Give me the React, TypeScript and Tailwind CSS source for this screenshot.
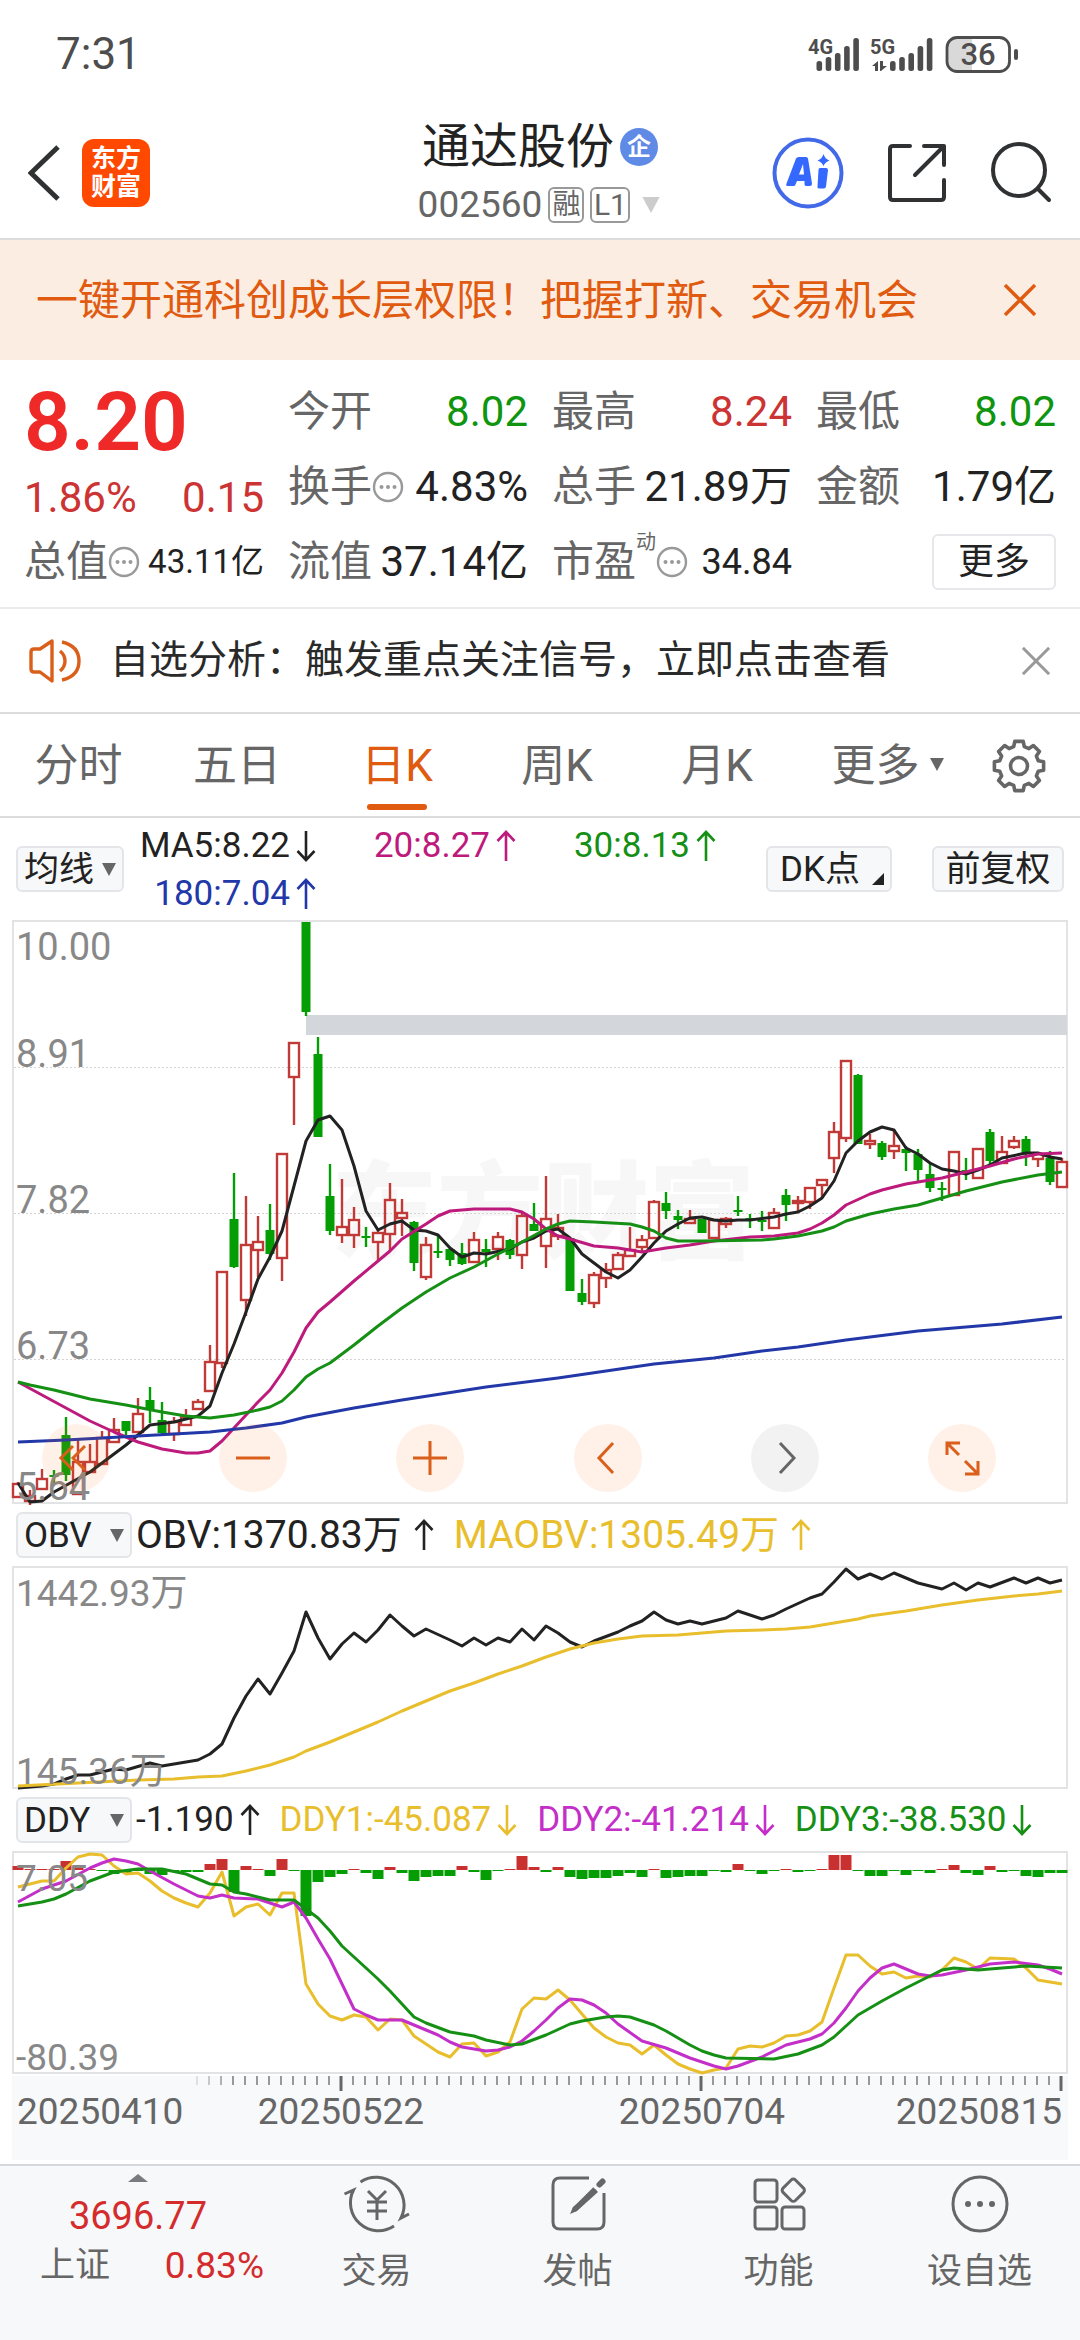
import React from "react";
import clsx from "clsx";

type Point = [number, number];
// direction, high, body top, body bottom, low
type Candle = ["r" | "g", number, number, number, number];

const STEP = 12;
const COUNT = 88;
const CHART_WIDTH = 1056;
const RED = "#c03a38";
const GREEN = "#049e04";

const xAt = (i: number) => 5 + i * STEP;
const toPoints = (line: Point[]) => line.map(([i, y]) => `${xAt(i)},${y}`).join(" ");

const candles: Candle[] = [
  ["r", 560, 562, 575, 575], ["r", 568, 574, 579, 583], ["r", 547, 557, 567, 567], ["g", 548, 553, 555, 561],
  ["g", 495, 513, 553, 559], ["r", 516, 540, 572, 572], ["r", 522, 540, 550, 550], ["r", 509, 516, 542, 542],
  ["r", 496, 508, 520, 520], ["g", 499, 499, 509, 513], ["r", 476, 492, 510, 510], ["g", 465, 478, 488, 501],
  ["g", 480, 498, 511, 512], ["r", 495, 500, 512, 519], ["r", 487, 495, 503, 503], ["r", 477, 480, 487, 487],
  ["r", 423, 440, 469, 469], ["r", 350, 350, 441, 446], ["g", 251, 297, 345, 346], ["r", 274, 323, 378, 394],
  ["r", 294, 320, 328, 355], ["g", 282, 308, 332, 338], ["r", 232, 232, 336, 359], ["r", 121, 121, 155, 203],
  ["g", 0, 0, 90, 94], ["g", 115, 132, 215, 215], ["g", 242, 274, 309, 313], ["r", 257, 305, 313, 321],
  ["r", 285, 298, 313, 326], ["g", 305, 314, 316, 325], ["r", 307, 311, 320, 338], ["r", 261, 278, 312, 329],
  ["r", 277, 291, 296, 314], ["g", 299, 300, 341, 349], ["r", 315, 323, 355, 358], ["g", 314, 329, 331, 336],
  ["g", 326, 327, 338, 344], ["g", 321, 331, 342, 343], ["r", 310, 318, 340, 340], ["g", 317, 327, 330, 345],
  ["r", 310, 315, 327, 338], ["g", 317, 318, 333, 337], ["r", 291, 294, 333, 347], ["g", 281, 302, 309, 309],
  ["r", 254, 297, 324, 346], ["r", 292, 306, 314, 318], ["g", 316, 316, 369, 369], ["g", 357, 371, 380, 383],
  ["r", 350, 353, 381, 386], ["r", 341, 348, 356, 366], ["r", 330, 333, 347, 347], ["r", 305, 328, 334, 334],
  ["r", 313, 318, 325, 330], ["r", 278, 280, 316, 316], ["g", 270, 281, 289, 297], ["g", 288, 294, 298, 307],
  ["r", 288, 297, 301, 301], ["g", 297, 297, 311, 311], ["r", 298, 298, 316, 316], ["r", 295, 297, 302, 306],
  ["g", 274, 288, 290, 294], ["g", 292, 296, 298, 306], ["g", 289, 298, 299, 309], ["r", 286, 291, 306, 306],
  ["g", 267, 273, 283, 299], ["r", 274, 279, 281, 289], ["r", 266, 266, 280, 287], ["r", 257, 258, 263, 276],
  ["r", 200, 210, 236, 251], ["r", 138, 139, 216, 220], ["g", 152, 153, 222, 222], ["r", 212, 219, 222, 227],
  ["g", 219, 221, 235, 238], ["r", 207, 224, 229, 237], ["g", 224, 227, 231, 249], ["g", 227, 232, 248, 259],
  ["g", 242, 252, 266, 270], ["g", 260, 266, 268, 279], ["r", 229, 230, 273, 273], ["g", 236, 248, 250, 258],
  ["r", 227, 227, 256, 256], ["g", 207, 210, 239, 242], ["r", 214, 230, 241, 241], ["r", 214, 219, 225, 227],
  ["g", 214, 217, 232, 244], ["r", 230, 232, 237, 245], ["g", 229, 236, 260, 263], ["r", 236, 240, 265, 265],
];

const ma5: Point[] = [
  [0, 561], [1, 580], [2, 579], [3, 570], [6, 550], [7, 541], [9, 523], [11, 503], [13, 500], [15, 494], [16, 484],
  [17, 451], [18, 422], [19, 390], [20, 357], [21, 335], [22, 309], [23, 264], [24, 219], [25, 198], [26, 194],
  [27, 208], [28, 244], [29, 289], [30, 308], [31, 302], [32, 299], [33, 308], [34, 309], [35, 313], [36, 326],
  [37, 335], [38, 331], [39, 332], [41, 327], [42, 320], [43, 316], [44, 309], [45, 307], [46, 316], [47, 332],
  [48, 341], [49, 350], [50, 356], [51, 348], [52, 335], [53, 321], [54, 309], [55, 302], [56, 296], [57, 295],
  [58, 298], [59, 299], [60, 298], [61, 298], [63, 295], [64, 292], [65, 290], [66, 284], [67, 276], [68, 259],
  [69, 231], [70, 219], [71, 210], [72, 205], [73, 208], [74, 226], [75, 232], [76, 241], [77, 247], [78, 249],
  [79, 252], [80, 248], [81, 243], [82, 236], [84, 231], [85, 231], [86, 235], [87, 237],
];

const ma20: Point[] = [
  [0, 460], [2, 473], [4, 486], [6, 499], [8, 510], [10, 520], [12, 527], [14, 531], [15, 531], [16, 529], [17, 519],
  [19, 493], [20, 480], [21, 468], [22, 451], [23, 430], [24, 406], [25, 390], [26, 380], [28, 359], [30, 339],
  [31, 329], [32, 317], [34, 302], [35, 294], [36, 289], [38, 287], [41, 287], [42, 290], [43, 297], [44, 307],
  [45, 314], [46, 317], [48, 324], [50, 326], [52, 330], [54, 326], [56, 323], [58, 319], [61, 315], [63, 314],
  [65, 311], [66, 307], [67, 301], [68, 293], [69, 283], [71, 272], [72, 268], [74, 262], [75, 260], [77, 256],
  [79, 250], [81, 244], [83, 237], [85, 232], [87, 231],
];

const ma30: Point[] = [
  [0, 460], [1, 463], [3, 468], [6, 477], [9, 483], [12, 490], [14, 494], [16, 496], [18, 493], [20, 488], [21, 485],
  [22, 479], [23, 468], [24, 455], [25, 447], [26, 441], [27, 432], [28, 423], [30, 404], [31, 395], [32, 386],
  [34, 370], [36, 356], [38, 345], [40, 332], [42, 320], [44, 307], [45, 302], [46, 299], [48, 300], [51, 302],
  [52, 305], [53, 309], [54, 316], [55, 319], [57, 319], [62, 318], [63, 317], [65, 314], [67, 309], [68, 305],
  [69, 299], [71, 292], [73, 287], [75, 283], [77, 276], [79, 269], [82, 260], [85, 253], [87, 250],
];

const ma180: Point[] = [
  [0, 520], [4, 518], [10, 514], [16, 510], [19, 506], [22, 501], [24, 495], [28, 486], [32, 478], [39, 465],
  [45, 456], [53, 442], [58, 436], [62, 429], [65, 425], [69, 418], [75, 409], [82, 402], [87, 395],
];

const obv: Point[] = [
  [0, 220], [2, 218], [3, 216], [4, 211], [5, 207], [6, 207], [8, 201], [9, 202], [11, 195], [12, 198], [15, 192],
  [16, 186], [17, 176], [18, 150], [19, 128], [20, 111], [21, 126], [22, 105], [23, 83], [24, 44], [25, 70],
  [26, 91], [27, 76], [28, 65], [29, 74], [30, 62], [31, 47], [32, 58], [33, 68], [34, 61], [36, 72], [37, 78],
  [38, 70], [39, 77], [40, 70], [41, 74], [42, 61], [43, 72], [44, 58], [45, 65], [46, 74], [47, 79], [48, 73],
  [50, 64], [51, 58], [52, 53], [53, 44], [54, 52], [55, 56], [56, 53], [57, 56], [59, 50], [60, 43], [62, 51],
  [63, 47], [64, 41], [66, 30], [67, 26], [68, 14], [69, 1], [70, 11], [71, 6], [72, 11], [73, 5], [74, 10],
  [75, 15], [77, 21], [78, 15], [79, 22], [80, 15], [81, 19], [83, 10], [84, 15], [85, 10], [86, 15], [87, 12],
];

const maObv: Point[] = [
  [0, 218], [5, 215], [10, 212], [13, 211], [15, 209], [17, 208], [19, 203], [21, 197], [23, 189], [24, 183],
  [26, 174], [28, 164], [30, 154], [32, 143], [34, 133], [36, 123], [38, 115], [40, 106], [42, 98], [44, 89],
  [46, 81], [48, 75], [50, 71], [52, 68], [55, 67], [57, 65], [59, 63], [62, 62], [64, 61], [66, 59], [68, 55],
  [70, 51], [71, 48], [74, 43], [77, 37], [80, 32], [83, 28], [85, 26], [87, 23],
];

const ddx = [
  4, 1, 1, 1, 9, 4, 1, -1, -4, -3, -1, -4, -5, -2, -2, -2, 6, 11, -22, 4, 1, -6, 11, -1, -46, -12, -7, -4, 1, -3, -9, 3,
  -3, -11, -7, -6, -6, 4, -2, -10, -1, 1, 14, 3, -2, 3, -7, -9, -8, -8, -6, -3, -7, 1, -8, -7, -6, -6, -1, -2, 6, -1,
  -4, -1, 1, -2, -1, 1, 15, 15, -1, -6, -6, -1, -5, -1, -3, 1, 5, -3, -5, 4, -2, -1, -6, -7, -3, -3,
];

const ddy1: Point[] = [
  [0, 34], [2, 28], [3, 28], [4, 15], [5, 4], [6, 1], [7, 2], [8, 13], [9, 21], [10, 20], [11, 28], [12, 38],
  [13, 45], [14, 50], [15, 54], [16, 40], [17, 19], [18, 63], [19, 54], [20, 51], [21, 62], [22, 40], [23, 40],
  [24, 131], [25, 151], [26, 163], [27, 167], [28, 162], [29, 164], [30, 177], [31, 166], [32, 167], [33, 183],
  [34, 191], [35, 199], [36, 204], [37, 191], [38, 190], [39, 203], [40, 199], [41, 189], [42, 156], [43, 145],
  [44, 146], [45, 137], [46, 147], [47, 161], [48, 175], [49, 184], [50, 190], [51, 192], [52, 201], [53, 192],
  [54, 202], [55, 211], [56, 216], [57, 220], [58, 217], [59, 215], [60, 196], [61, 193], [62, 194], [63, 190],
  [64, 183], [65, 182], [66, 178], [67, 169], [68, 135], [69, 102], [70, 102], [71, 113], [72, 121], [73, 119],
  [74, 125], [75, 123], [76, 124], [77, 117], [78, 105], [79, 109], [80, 116], [81, 105], [83, 106], [84, 115],
  [85, 127], [87, 131],
];

const ddy2: Point[] = [
  [0, 49], [2, 36], [4, 28], [6, 15], [7, 10], [8, 6], [9, 8], [10, 11], [11, 18], [13, 31], [15, 43], [16, 45],
  [17, 42], [18, 45], [20, 46], [22, 54], [23, 49], [24, 65], [25, 86], [26, 106], [27, 131], [28, 156], [29, 162],
  [30, 167], [32, 167], [34, 177], [35, 182], [36, 189], [37, 194], [39, 198], [40, 197], [41, 194], [42, 188],
  [43, 178], [44, 167], [45, 155], [46, 146], [47, 147], [48, 152], [49, 160], [50, 171], [52, 188], [54, 195],
  [56, 205], [58, 213], [59, 216], [60, 213], [62, 204], [64, 192], [66, 186], [67, 181], [68, 170], [69, 155],
  [70, 138], [71, 125], [72, 115], [73, 111], [74, 116], [75, 121], [76, 123], [77, 122], [79, 117], [81, 111],
  [83, 109], [85, 112], [86, 116], [87, 121],
];

const ddy3: Point[] = [
  [0, 53], [2, 49], [3, 46], [4, 41], [6, 28], [8, 19], [10, 16], [12, 16], [14, 21], [16, 31], [17, 32], [18, 39],
  [19, 41], [21, 47], [23, 47], [25, 65], [26, 78], [27, 93], [28, 104], [30, 126], [31, 138], [32, 151], [33, 164],
  [34, 170], [36, 179], [38, 183], [39, 187], [41, 192], [42, 191], [44, 182], [46, 171], [47, 168], [49, 164],
  [50, 163], [51, 164], [53, 172], [54, 178], [56, 192], [57, 198], [58, 202], [59, 205], [63, 206], [65, 201],
  [67, 192], [68, 184], [69, 173], [70, 162], [72, 148], [74, 135], [76, 123], [77, 117], [78, 115], [80, 117],
  [82, 115], [84, 113], [87, 115],
];

const Line = ({ data, color }: { data: Point[]; color: string }) => (
  <polyline points={toPoints(data)} fill="none" stroke={color} strokeWidth="3" strokeLinejoin="round" />
);

const Arrow = ({ down = false, className }: { down?: boolean; className?: string }) => (
  <svg viewBox="0 0 20 32" className={clsx("inline-block shrink-0", className)} fill="none" stroke="currentColor" strokeWidth="2.6">
    <path d={down ? "M10 1V30M1.500 21L10 30L18.500 21" : "M10 31V2M1.500 11L10 2L18.500 11"} />
  </svg>
);

const Triangle = ({ className }: { className?: string }) => (
  <svg viewBox="0 0 14 13" className={className} fill="currentColor">
    <path d="M0 0H14L7 13Z" />
  </svg>
);

const More = () => (
  <svg viewBox="0 0 32 32" className="size-8 shrink-0" fill="none" stroke="#999" strokeWidth="2.4">
    <circle cx="16" cy="16" r="14" />
    <g fill="#999" stroke="none">
      <circle cx="9.500" cy="16" r="2" />
      <circle cx="16" cy="16" r="2" />
      <circle cx="22.500" cy="16" r="2" />
    </g>
  </svg>
);

const Close = ({ className }: { className?: string }) => (
  <svg viewBox="0 0 32 32" className={className} fill="none" stroke="currentColor" strokeWidth="3.4">
    <path d="M1 1L31 31M31 1L1 31" />
  </svg>
);

const Gear = () => {
  const points: string[] = [];
  for (let i = 0; i < 8; i++) {
    const a = (i * Math.PI) / 4 - Math.PI / 2;
    [[-0.27, 20], [-0.17, 25], [0.17, 25], [0.27, 20]].forEach(([d, r]) => {
      points.push(`${(28 + r * Math.cos(a + d)).toFixed(1)},${(28 + r * Math.sin(a + d)).toFixed(1)}`);
    });
  }
  return (
    <svg viewBox="0 0 56 56" className="size-14" fill="none" stroke="#666" strokeWidth="3.6" strokeLinejoin="round">
      <polygon points={points.join(" ")} />
      <circle cx="28" cy="28" r="8.500" />
    </svg>
  );
};

const StatusBar = () => {
  const tops = [30, 26, 22, 15, 7];
  return (
    <div className="flex h-27 items-center justify-between pl-14 pr-15 text-[#4d4d4d]">
      <span className="text-[44px]">7:31</span>
      <svg viewBox="0 0 212 46" className="h-[46px] w-[212px]" fill="currentColor">
        <text x="0" y="23" fontSize="20" fontWeight="700">4G</text>
        <text x="62" y="23" fontSize="20" fontWeight="700">5G</text>
        {tops.map((top, i) => (
          <React.Fragment key={top}>
            <rect x={8.5 + i * 9.2} y={top} width="5.600" height={40 - top} rx="2.500" />
            <rect x={82 + i * 9.2} y={top} width="5.600" height={40 - top} rx="2.500" />
          </React.Fragment>
        ))}
        <path d="M64 35L70 30V40H67V35ZM72 30H75V35H79L73 40H72Z" />
        <path d="M164 7H148Q139 7 139 16V31Q139 40 148 40H164Z" fill="#d9d9d9" />
        <rect x="139" y="6.500" width="62.500" height="34" rx="10" fill="none" stroke="currentColor" strokeWidth="2.800" />
        <rect x="206" y="18" width="4" height="11" rx="2" />
        <text x="170" y="34" fontSize="31" fontWeight="500" textAnchor="middle">36</text>
      </svg>
    </div>
  );
};

const Header = () => (
  <header className="grid h-[132px] grid-cols-[1fr_auto_1fr] items-center border-b-2 border-[#dadcde] pl-7 pr-7">
    <div className="flex items-center gap-5">
      <button aria-label="返回">
        <svg viewBox="0 0 34 56" className="h-14 w-[34px]" fill="none" stroke="#2f3133" strokeWidth="5">
          <path d="M30 2L3 28L30 54" />
        </svg>
      </button>
      <a href="#home" className="flex size-17 flex-col items-center justify-center rounded-xl bg-[#ff4800] text-[25px] font-bold leading-7 text-white">
        <span>东方</span>
        <span>财富</span>
      </a>
    </div>
    <div className="flex flex-col items-center pt-2">
      <h1 className="flex items-center gap-1.5 text-5xl leading-14 text-[#222]">
        通达股份
        <span className="flex size-[38px] items-center justify-center rounded-full bg-[#5f8ae6] text-[24px] font-bold text-white">企</span>
      </h1>
      <button className="flex items-center gap-1.5 text-[37px] leading-15 text-[#666]">
        002560
        <span className="flex h-9 w-9 items-center justify-center rounded-md border-2 border-[#999] text-[28px] leading-8">融</span>
        <span className="flex h-9 w-10 items-center justify-center rounded-md border-2 border-[#999] text-[30px] leading-8">L1</span>
        <Triangle className="ml-1 h-4 w-[22px] text-[#ccc]" />
      </button>
    </div>
    <div className="flex items-center justify-end gap-[42px]">
      <button aria-label="Ai">
        <svg viewBox="0 0 72 72" className="size-[72px]">
          <circle cx="36" cy="36" r="33.500" fill="none" stroke="#4169e8" strokeWidth="4" />
          <path d="M24 21.500Q25 20 26.500 20H34Q35.500 20 36 21.500L40 46.500Q40 49 38 49H34Q32.500 49 32.500 47V44H25L23.500 47.500Q23 49 21.500 49H15.500Q13.500 49 14.500 46.500ZM31 27L27 37.500H32Z" fill="#3468ff" fillRule="evenodd" />
          <path d="M48 31H54Q56 31 56 33L54 49.500Q53.500 51.500 52 51.500H47Q45 51.500 45.500 49.500L46.500 33Q46.500 31 48 31ZM51.500 17Q53 22 57.500 23.500Q53 25 51.500 29Q50 25 45.500 23.500Q50 22 51.500 17Z" fill="#3468ff" />
        </svg>
      </button>
      <button aria-label="分享">
        <svg viewBox="0 0 62 62" className="size-[62px]" fill="none" stroke="#2f3133" strokeWidth="4" strokeLinecap="round" strokeLinejoin="round">
          <path d="M24 4H7Q4 4 4 7V55Q4 58 7 58H55Q58 58 58 55V38M38 4H58V23M58 4L29 33" />
        </svg>
      </button>
      <button aria-label="搜索">
        <svg viewBox="0 0 62 62" className="size-[62px]" fill="none" stroke="#2f3133" strokeWidth="4" strokeLinecap="round">
          <circle cx="29" cy="28" r="26" />
          <path d="M48 47L59 58" />
        </svg>
      </button>
    </div>
  </header>
);

interface QuoteProps {
  label: string;
  value: string;
  color?: string;
  more?: boolean;
  sup?: string;
  size?: string;
}

const Quote = ({ label, value, color = "text-[#222]", more, sup, size = "text-[42px]" }: QuoteProps) => (
  <div className="flex h-[75px] items-center justify-between whitespace-nowrap">
    <span className="flex items-center text-[42px] text-[#666]">
      {label}
      {sup && <sup className="-top-5 text-xl leading-none">{sup}</sup>}
      {more && <More />}
    </span>
    <span className={clsx(color, size)}>{value}</span>
  </div>
);

const QuotePanel = () => (
  <section className="grid grid-cols-4 gap-x-6 border-b-2 border-[#ececee] px-6 pb-2 pt-3.5">
    <div>
      <div className="h-24 text-[82px] font-semibold leading-24 text-[#ef2828]">8.20</div>
      <div className="flex h-[54px] items-center justify-between text-[42px] text-[#cc3333]">
        <span>1.86%</span>
        <span>0.15</span>
      </div>
      <Quote label="总值" value="43.11亿" more size="text-[33px]" />
    </div>
    <div>
      <Quote label="今开" value="8.02" color="text-[#0f950f]" />
      <Quote label="换手" value="4.83%" more />
      <Quote label="流值" value="37.14亿" />
    </div>
    <div>
      <Quote label="最高" value="8.24" color="text-[#cc3333]" />
      <Quote label="总手" value="21.89万" />
      <Quote label="市盈" value="34.84" sup="动" more size="text-4xl" />
    </div>
    <div>
      <Quote label="最低" value="8.02" color="text-[#0f950f]" />
      <Quote label="金额" value="1.79亿" />
      <div className="flex h-[75px] items-center justify-end">
        <button className="h-14 w-[124px] rounded-md border-2 border-[#e6e7ea] text-4xl leading-none text-[#222]">更多</button>
      </div>
    </div>
  </section>
);

const Notice = () => (
  <div className="flex h-[105px] items-center border-b-2 border-[#dcdcde] pl-7 pr-[30px]">
    <svg viewBox="0 0 54 46" className="h-[46px] w-[54px]" fill="none" stroke="#d95f1a" strokeWidth="3.400" strokeLinejoin="round">
      <path d="M3 14Q3 11 6 11H12L24 3V43L12 34H6Q3 34 3 31Z" />
      <path d="M32 13Q37 17 37 23Q37 29 32 33M34 4Q51 8 51 23Q51 38 34 42" />
    </svg>
    <a href="#signal" className="ml-7 flex-1 whitespace-nowrap text-[39px] text-[#2a2a2a]">自选分析：触发重点关注信号，立即点击查看</a>
    <button aria-label="关闭" className="text-[#999]">
      <Close className="size-7" />
    </button>
  </div>
);

const tabs = ["分时", "五日", "日K", "周K", "月K"];

const Tabs = () => (
  <nav className="grid h-[104px] grid-cols-[157fr_160fr_160fr_160fr_160fr_181fr_82fr] border-b-2 border-[#dcdcde] pr-5 text-[44px] text-[#666]">
    {tabs.map((tab) => {
      const active = tab === "日K";
      return (
        <button key={tab} className={clsx("flex flex-col items-center pt-5", active && "text-[#e05a10]")}>
          <span className="leading-16">{tab}</span>
          {active && <span className="mt-1.5 h-1.5 w-15 rounded-full bg-[#e05a10]" />}
        </button>
      );
    })}
    <button className="flex items-start justify-center gap-2.5 pt-5 leading-16">
      更多
      <Triangle className="mt-6 h-[13px] w-3.5" />
    </button>
    <button aria-label="设置" className="flex justify-center pt-6">
      <Gear />
    </button>
  </nav>
);

const IndicatorSelect = ({ id, label, options, className }: { id: string; label: string; options: string[]; className: string }) => (
  <label htmlFor={id} className={clsx("relative block shrink-0", className)}>
    <span className="sr-only">{label}</span>
    <select id={id} className="block h-[46px] w-full appearance-none rounded-md border-2 border-[#e3e5e9] bg-[#f7f8fa] pl-1.5 text-[35px] leading-none text-[#222]">
      {options.map((option) => (
        <option key={option}>{option}</option>
      ))}
    </select>
    <Triangle className="pointer-events-none absolute right-2 top-[17px] h-[13px] w-3.5 text-[#666]" />
  </label>
);

const MaLegend = () => (
  <div className="flex h-[102px] items-start px-4 text-[35px]">
    <IndicatorSelect id="main-indicator" label="主图指标" options={["均线"]} className="mt-7 w-[108px]" />
    <div className="grid grid-cols-[192px_200px_200px] pt-1 leading-12">
      <span className="flex items-center justify-end gap-1.5 text-[#222]">MA5:8.22<Arrow down className="h-8 w-5" /></span>
      <span className="flex items-center justify-end gap-1.5 text-[#bd1a7c]">20:8.27<Arrow className="h-8 w-5" /></span>
      <span className="flex items-center justify-end gap-1.5 text-[#159015]">30:8.13<Arrow className="h-8 w-5" /></span>
      <span className="flex items-center justify-end gap-1.5 text-[#2238a8]">180:7.04<Arrow className="h-8 w-5" /></span>
    </div>
    <div className="mt-7 ml-auto flex gap-10">
      <button className="flex h-[46px] w-[126px] items-center rounded-md border-2 border-[#e3e5e9] bg-[#f7f8fa] pl-3 leading-none text-[#222]">
        DK点
        <svg viewBox="0 0 12 12" className="ml-3 mt-5 size-3" fill="#222">
          <path d="M12 0V12H0Z" />
        </svg>
      </button>
      <button className="h-[46px] w-[132px] rounded-md border-2 border-[#e3e5e9] bg-[#f7f8fa] leading-none text-[#222]">前复权</button>
    </div>
  </div>
);

const controls = [
  { name: "最左", d: "M31 22L19 34L31 46M43 22L31 34L43 46" },
  { name: "缩小", d: "M17 34H51" },
  { name: "放大", d: "M17 34H51M34 17V51" },
  { name: "左移", d: "M39 19L25 34L39 49" },
  { name: "右移", d: "M29 19L43 34L29 49", off: true },
  { name: "全屏", d: "M19 31V19H32M19 19L31 31M50 37V50H37M37 37L50 50" },
];

const gridLines = [145, 291, 437];
const priceLabels: [string, number][] = [["10.00", 38], ["8.91", 145], ["7.82", 291], ["6.73", 437], ["5.64", 578]];

const PriceChart = () => (
  <div className="relative mx-3 border-2 border-[#e2e3e5]">
    <svg viewBox="1 0 1052 580" className="block w-full overflow-visible">
      <text x="318" y="328" fontSize="106" fontWeight="900" fill="#f7f7f8">东方财富</text>
      {gridLines.map((y) => (
        <path key={y} d={`M1 ${y}.500H1053`} stroke="#d4d4d4" strokeDasharray="2 2" />
      ))}
      <rect x="293" y="93" width="761" height="20" fill="#d3d7dc" />
      {candles.map(([dir, high, top, bottom, low], i) => {
        const x = xAt(i);
        const color = dir === "r" ? RED : GREEN;
        const h = Math.max(bottom - top, 2);
        return (
          <g key={i} stroke={color} strokeWidth="2.4">
            <path d={`M${x} ${high}V${top}M${x} ${bottom}V${low}`} />
            {dir === "r" ? (
              <rect x={x - 5} y={top} width="10" height={h} fill="none" />
            ) : (
              <rect x={x - 4.5} y={top} width="9" height={h} fill={color} stroke="none" />
            )}
          </g>
        );
      })}
      <Line data={ma5} color="#222" />
      <Line data={ma20} color="#bd1a7c" />
      <Line data={ma30} color="#159015" />
      <Line data={ma180} color="#2238a8" />
      <g fill="#888" fontSize="38">
        {priceLabels.map(([label, y]) => (
          <text key={label} x="3" y={y}>{label}</text>
        ))}
      </g>
    </svg>
    <div className="absolute inset-x-0 bottom-2.5 flex justify-between pl-7 pr-[70px]">
      {controls.map(({ name, d, off }) => (
        <button key={name} aria-label={name} className={clsx("size-17 rounded-full", off ? "bg-[#f2f2f2]" : "bg-[#ff6a1f]/10")}>
          <svg viewBox="0 0 68 68" fill="none" stroke={off ? "#666" : "#d95f1a"} strokeWidth="3">
            <path d={d} />
          </svg>
        </button>
      ))}
    </div>
  </div>
);

const ObvChart = () => (
  <div className="mx-3 border-2 border-[#e2e3e5]">
    <svg viewBox="1 0 1052 219" className="block w-full overflow-visible">
      <Line data={obv} color="#222" />
      <Line data={maObv} color="#e8be2c" />
      <g fill="#888" fontSize="37">
        <text x="3" y="38">1442.93万</text>
        <text x="3" y="216">145.36万</text>
      </g>
    </svg>
  </div>
);

const DdyChart = () => (
  <div className="mx-3 border-2 border-[#e2e3e5]">
    <svg viewBox="1 0 1052 219" className="block w-full overflow-visible">
      {ddx.map((v, i) => (
        <rect key={i} x={xAt(i) - 5.5} y={v > 0 ? 17 - v : 17} width="11" height={Math.abs(v)} fill={v > 0 ? "#c93030" : GREEN} />
      ))}
      <Line data={ddy1} color="#e8be2c" />
      <Line data={ddy2} color="#c32fc8" />
      <Line data={ddy3} color="#159015" />
      <g fill="#888" fontSize="37">
        <text x="3" y="38">7.05</text>
        <text x="3" y="217">-80.39</text>
      </g>
    </svg>
  </div>
);

const DateAxis = () => (
  <div className="mx-3 mt-0.5 bg-[#f8f9fb]">
    <svg viewBox={`0 0 ${CHART_WIDTH} 84`} className="block w-full">
      {Array.from({ length: COUNT - 15 }, (_, n) => n + 15).map((i) => {
        const major = i % 30 === 27;
        return (
          <path
            key={i}
            d={`M${xAt(i)} 0V${major ? 15 : 9}`}
            stroke={major ? "#666" : "#999"}
            strokeWidth={major ? 3 : 2}
            opacity={i < 18 ? (i - 14) / 4 : 1}
          />
        );
      })}
      <g fill="#666" fontSize="37">
        <text x="5" y="48">20250410</text>
        <text x="329" y="48" textAnchor="middle">20250522</text>
        <text x="690" y="48" textAnchor="middle">20250704</text>
        <text x="1050" y="48" textAnchor="end">20250815</text>
      </g>
    </svg>
  </div>
);

const navItems = [
  {
    label: "交易",
    icon: (
      <path d="M13.500 8A28 28 0 0 1 54 44L62 40M47 52A28 28 0 0 1 6.500 16L-2.500 20M21 17L30 26L39 17M20 28H40M20 37H40M30 26V46" />
    ),
  },
  {
    label: "发帖",
    icon: (
      <>
        <path d="M41 4H12Q5 4 5 11V48Q5 55 12 55H49Q56 55 56 48V19" />
        <path d="M47 15L50 18L29 37L22 40L25 33Z" stroke="none" fill="#666" />
        <path d="M26 36L47 15" strokeWidth="5" />
        <path d="M51.500 10.500L54.500 7.500" strokeWidth="6" strokeLinecap="round" />
      </>
    ),
  },
  {
    label: "功能",
    icon: (
      <>
        <rect x="6" y="6" width="22" height="22" rx="3" />
        <rect x="6" y="33" width="22" height="22" rx="3" />
        <rect x="33" y="33" width="22" height="22" rx="3" />
        <rect x="35.500" y="7.500" width="17.500" height="17.500" rx="3" transform="rotate(45 44.300 16.300)" />
      </>
    ),
  },
  {
    label: "设自选",
    icon: (
      <>
        <circle cx="30" cy="30" r="27" />
        <g fill="#666" stroke="none">
          <circle cx="18" cy="30" r="3" />
          <circle cx="30" cy="30" r="3" />
          <circle cx="42" cy="30" r="3" />
        </g>
      </>
    ),
  },
];

const BottomNav = () => (
  <nav className="mt-1 grid flex-1 grid-cols-[276fr_201fr_201fr_201fr_201fr] border-t-2 border-[#d5d9de] bg-[#f7f8fa] text-[35px] text-[#666]">
    <button className="flex flex-col items-center pt-2">
      <svg viewBox="0 0 20 8" className="h-2 w-5" fill="#7a7a80">
        <path d="M10 0L20 8H0Z" />
      </svg>
      <span className="mt-2.5 text-[38px] leading-12 text-[#d42c2c]">3696.77</span>
      <span className="flex w-full justify-between pl-10 pr-3 leading-13">
        上证
        <span className="text-[37px] text-[#d42c2c]">0.83%</span>
      </span>
    </button>
    {navItems.map(({ label, icon }) => (
      <button key={label} className="flex flex-col items-center pt-2">
        <svg viewBox="0 0 60 60" className="size-15 overflow-visible" fill="none" stroke="#666" strokeWidth="3">
          {icon}
        </svg>
        <span className="mt-3 leading-13">{label}</span>
      </button>
    ))}
  </nav>
);

const App = () => {
  return (
    <div className="flex min-h-screen flex-col bg-white font-['Roboto','Noto_Sans_CJK_SC',sans-serif]">
      <StatusBar />
      <Header />
      <div className="flex h-30 items-center justify-between bg-[#fcede3] px-9 text-[#e05a10]">
        <a href="#open" className="whitespace-nowrap text-[42px]">一键开通科创成长层权限！把握打新、交易机会</a>
        <button aria-label="关闭">
          <Close className="mr-2 size-8" />
        </button>
      </div>
      <QuotePanel />
      <Notice />
      <Tabs />
      <MaLegend />
      <PriceChart />
      <div className="flex h-[62px] items-center whitespace-nowrap px-4 text-[39px]">
        <IndicatorSelect id="obv" label="副图指标一" options={["OBV"]} className="w-[116px]" />
        <span className="ml-1 flex items-center gap-3 text-[#222]">OBV:1370.83万<Arrow className="h-9 w-5" /></span>
        <span className="ml-5 flex items-center gap-3 text-[#e8be2c]">MAOBV:1305.49万<Arrow className="h-9 w-5" /></span>
      </div>
      <ObvChart />
      <div className="flex h-[62px] items-center whitespace-nowrap px-4 text-[35px]">
        <IndicatorSelect id="ddy" label="副图指标二" options={["DDY"]} className="w-[116px]" />
        <span className="ml-1 flex items-center gap-1.5 text-[#222]">-1.190<Arrow className="h-9 w-5" /></span>
        <span className="ml-5 flex items-center gap-1.5 text-[#e8be2c]">DDY1:-45.087<Arrow down className="h-9 w-5" /></span>
        <span className="ml-5 flex items-center gap-1.5 text-[#c32fc8]">DDY2:-41.214<Arrow down className="h-9 w-5" /></span>
        <span className="ml-5 flex items-center gap-1.5 text-[#159015]">DDY3:-38.530<Arrow down className="h-9 w-5" /></span>
      </div>
      <DdyChart />
      <DateAxis />
      <BottomNav />
    </div>
  );
};

export default App;
